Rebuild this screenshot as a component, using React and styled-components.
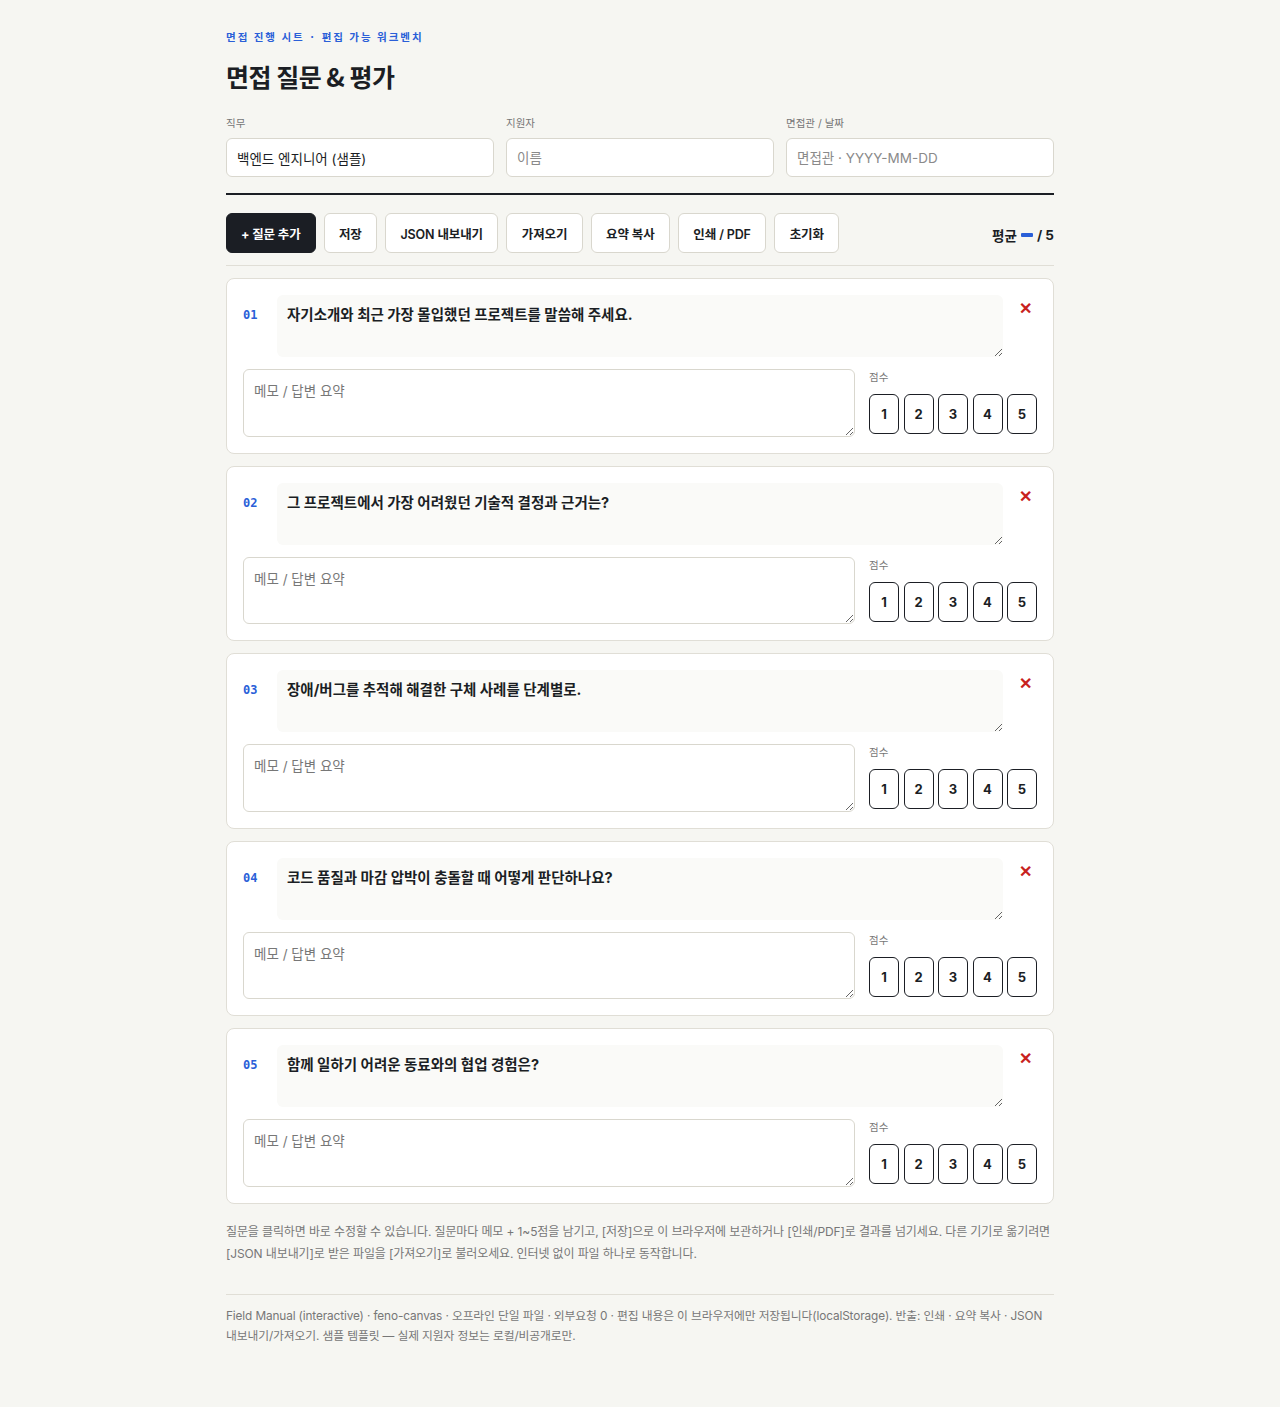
import React, { useState } from "react";
import styled, { createGlobalStyle } from "styled-components";

const GlobalStyle = createGlobalStyle`
    body {
        margin: 0;
        background: #f6f6f2;
        font-family: "Inter", "Noto Sans CJK KR", sans-serif;
        color: #1b1e24;
    }
    * { box-sizing: border-box; }
`

const Page = styled.main`
    width: 828px;
    margin: 0 auto;
    padding: 30px 0 60px 0;
`

const Eyebrow = styled.div`
    font-family: "Noto Sans CJK KR", sans-serif;
    font-size: 10.5px;
    font-weight: 700;
    letter-spacing: 0.19em;
    color: #2a5fd8;
    line-height: 14px;
`

const Title = styled.h1`
    margin: 16px 0 0 0;
    font-family: "Noto Sans CJK KR", sans-serif;
    font-size: 25px;
    font-weight: 700;
    line-height: 32px;
    letter-spacing: -0.02em;
`

const MetaRow = styled.div`
    display: grid;
    grid-template-columns: repeat(3, 1fr);
    gap: 12px;
    margin-top: 25px;
    padding-bottom: 16px;
    border-bottom: 2px solid #1b1e24;
`

const Field = styled.label`
    display: flex;
    flex-direction: column;
    gap: 7px;
`

const FieldLabel = styled.span`
    font-size: 10.5px;
    color: #777;
    line-height: 14px;
`

const Input = styled.input`
    height: 39px;
    border: 1px solid #d9d7ce;
    border-radius: 6px;
    background: #fff;
    padding: 0 10px;
    font-family: inherit;
    font-size: 13.5px;
    color: #1b1e24;
    &::placeholder { color: #8a8a8a; }
`

const Toolbar = styled.div`
    display: flex;
    align-items: center;
    gap: 8px;
    padding: 18px 0 12px 0;
    border-bottom: 1px solid #e0ded6;
`

const Button = styled.button`
    height: 40px;
    padding: 0 ${p => (p.$primary ? "14px" : "14.4px")};
    border-radius: 6px;
    border: 1px solid ${p => (p.$primary ? "#1b1e24" : "#d9d7ce")};
    background: ${p => (p.$primary ? "#1b1e24" : "#fff")};
    color: ${p => (p.$primary ? "#fff" : "#1b1e24")};
    font-family: inherit;
    font-size: 12.5px;
    font-weight: ${p => (p.$primary ? 700 : 600)};
    letter-spacing: -0.01em;
    cursor: pointer;
`

const Average = styled.div`
    margin-left: auto;
    display: flex;
    align-items: center;
    gap: 4px;
    font-size: 13.5px;
    font-weight: 700;
    padding-top: 4px;
`

const Dash = styled.span`
    display: inline-block;
    width: 12px;
    height: 4px;
    border-radius: 1px;
    background: #2a5fd8;
`

const List = styled.div`
    display: flex;
    flex-direction: column;
    gap: 12px;
    margin-top: 12px;
`

const Card = styled.section`
    background: #fff;
    border: 1px solid #e0ded6;
    border-radius: 8px;
    padding: 16px;
    display: flex;
    flex-direction: column;
    gap: 12px;
`

const QuestionRow = styled.div`
    display: flex;
    align-items: flex-start;
    gap: 10px;
`

const Num = styled.span`
    width: 24px;
    padding-top: 13px;
    font-family: "DejaVu Sans Mono", monospace;
    font-size: 12px;
    font-weight: 700;
    color: #2a5fd8;
`

const Question = styled.textarea`
    flex: 1;
    height: 62px;
    border: none;
    border-radius: 6px;
    background: #fafaf8;
    padding: 10px 10px;
    font-family: inherit;
    font-size: 14.5px;
    font-weight: 700;
    line-height: 20px;
    color: #1b1e24;
    resize: vertical;
    outline: none;
`

const Remove = styled.button`
    width: 24px;
    border: none;
    background: none;
    padding: 4px 0 0 0;
    text-align: center;
    color: #c8231e;
    font-size: 16px;
    font-weight: 700;
    line-height: 20px;
    cursor: pointer;
`

const AnswerRow = styled.div`
    display: flex;
    gap: 14px;
`

const Memo = styled.textarea`
    flex: 1;
    height: 67.6px;
    border: 1px solid #d9d7ce;
    border-radius: 6px;
    background: #fff;
    padding: 11px 10px;
    font-family: inherit;
    font-size: 13.5px;
    line-height: 20px;
    resize: vertical;
    &::placeholder { color: #777; }
`

const ScoreBox = styled.div`
    display: flex;
    flex-direction: column;
    gap: 9px;
    padding-top: 2px;
`

const ScoreLabel = styled.span`
    font-size: 10.5px;
    color: #777;
    line-height: 14px;
`

const Scores = styled.div`
    display: flex;
    gap: 4.5px;
`

const Score = styled.button`
    width: 30px;
    height: 40px;
    border: 1.5px solid #1b1e24;
    border-radius: 6px;
    background: ${p => (p.$active ? "#1b1e24" : "#fff")};
    color: ${p => (p.$active ? "#fff" : "#1b1e24")};
    font-family: inherit;
    font-size: 13px;
    font-weight: 700;
    padding: 0;
    cursor: pointer;
`

const Help = styled.p`
    margin: 17px 0 0 0;
    font-size: 12px;
    letter-spacing: -0.01em;
    line-height: 22px;
    color: #777;
`

const Footer = styled.footer`
    margin-top: 29px;
    padding-top: 11px;
    border-top: 1px solid #e0ded6;
    font-size: 11.8px;
    letter-spacing: -0.01em;
    line-height: 20px;
    color: #777;
`

const questions = [
    "자기소개와 최근 가장 몰입했던 프로젝트를 말씀해 주세요.",
    "그 프로젝트에서 가장 어려웠던 기술적 결정과 근거는?",
    "장애/버그를 추적해 해결한 구체 사례를 단계별로.",
    "코드 품질과 마감 압박이 충돌할 때 어떻게 판단하나요?",
    "함께 일하기 어려운 동료와의 협업 경험은?",
]

export default function App() {
    const [scores, setScores] = useState({})

    return (
        <>
            <GlobalStyle />
            <Page>
                <Eyebrow>면접 진행 시트 · 편집 가능 워크벤치</Eyebrow>
                <Title>면접 질문 &amp; 평가</Title>

                <MetaRow>
                    <Field>
                        <FieldLabel>직무</FieldLabel>
                        <Input defaultValue="백엔드 엔지니어 (샘플)" />
                    </Field>
                    <Field>
                        <FieldLabel>지원자</FieldLabel>
                        <Input placeholder="이름" />
                    </Field>
                    <Field>
                        <FieldLabel>면접관 / 날짜</FieldLabel>
                        <Input placeholder="면접관 · YYYY-MM-DD" />
                    </Field>
                </MetaRow>

                <Toolbar>
                    <Button $primary>+ 질문 추가</Button>
                    <Button>저장</Button>
                    <Button>JSON 내보내기</Button>
                    <Button>가져오기</Button>
                    <Button>요약 복사</Button>
                    <Button>인쇄 / PDF</Button>
                    <Button>초기화</Button>
                    <Average>평균 <Dash /> / 5</Average>
                </Toolbar>

                <List>
                    {questions.map((q, i) => (
                        <Card key={i}>
                            <QuestionRow>
                                <Num>{String(i + 1).padStart(2, "0")}</Num>
                                <Question defaultValue={q} />
                                <Remove aria-label="삭제">✕</Remove>
                            </QuestionRow>
                            <AnswerRow>
                                <Memo placeholder="메모 / 답변 요약" />
                                <ScoreBox>
                                    <ScoreLabel>점수</ScoreLabel>
                                    <Scores>
                                        {[1, 2, 3, 4, 5].map(n => (
                                            <Score
                                                key={n}
                                                $active={scores[i] === n}
                                                onClick={() => setScores({ ...scores, [i]: n })}
                                            >
                                                {n}
                                            </Score>
                                        ))}
                                    </Scores>
                                </ScoreBox>
                            </AnswerRow>
                        </Card>
                    ))}
                </List>

                <Help>
                    질문을 클릭하면 바로 수정할 수 있습니다. 질문마다 메모 + 1~5점을 남기고, [저장]으로 이 브라우저에 보관하거나 [인쇄/PDF]로 결과를 넘기세요. 다른 기기로 옮기려면 [JSON 내보내기]로 받은 파일을 [가져오기]로 불러오세요. 인터넷 없이 파일 하나로 동작합니다.
                </Help>

                <Footer>
                    Field Manual (interactive) · feno-canvas · 오프라인 단일 파일 · 외부요청 0 · 편집 내용은 이 브라우저에만 저장됩니다(localStorage). 반출: 인쇄 · 요약 복사 · JSON 내보내기/가져오기. 샘플 템플릿 — 실제 지원자 정보는 로컬/비공개로만.
                </Footer>
            </Page>
        </>
    )
}
